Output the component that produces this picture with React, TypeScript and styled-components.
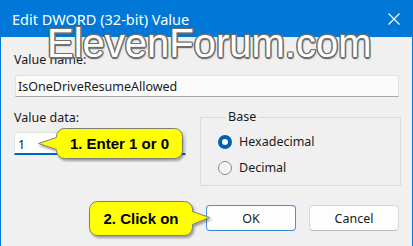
import React from "react";
import styled, { createGlobalStyle } from "styled-components";

const Global = createGlobalStyle`
  html, body { margin: 0; padding: 0; background: #f0f0f0; }
  body { font-family: "Noto Sans", "Liberation Sans", sans-serif; }
`;

const Window = styled.div`
  position: relative;
  width: 413px;
  height: 246px;
  box-sizing: border-box;
  border-left: 1px solid #0078d7;
  border-right: 1px solid #0078d7;
  background: #f0f0f0;
  overflow: hidden;
  display: flex;
  flex-direction: column;
`;

const TitleBar = styled.div`
  height: 37px;
  flex: none;
  background: #0078d7;
  display: flex;
  align-items: center;
  justify-content: space-between;
  padding: 0 12px 0 11px;
`;

const Title = styled.span`
  color: #ffffff;
  font-size: 14.5px;
  line-height: 16px;
  margin-top: 1px;
`;

const CloseBtn = styled.svg`
  width: 12px;
  height: 12px;
  display: block;
  margin-top: 1px;
`;

const Body = styled.div`
  padding: 15px 12px 0 13px;
  display: flex;
  flex-direction: column;
  color: #1a1a1a;
  font-size: 12.5px;
`;

const Label = styled.div`
  line-height: 16px;
  height: 16px;
`;

const Field = styled.div<{ $focused?: boolean }>`
  box-sizing: border-box;
  height: ${(p) => (p.$focused ? 23 : 22)}px;
  padding: ${(p) => (p.$focused ? "4px 3px 0" : "3px 2px 0")};
  line-height: 16px;
  background: ${(p) => (p.$focused ? "#ffffff" : "#fbfbfb")};
  border: 1px solid #e3e3e3;
  border-bottom: ${(p) => (p.$focused ? "2px solid #0067c0" : "1px solid #a8a8a8")};
  border-radius: 3px 3px 0 0;
  color: #1a1a1a;
`;

const NameField = styled(Field)`
  margin: 7px 1px 0 1px;
`;

const DataRow = styled.div`
  display: flex;
  margin-top: 13px;
`;

const DataCol = styled.div`
  width: 172px;
  display: flex;
  flex-direction: column;
`;

const DataField = styled(Field)`
  margin-top: 6px;
`;

const GroupBox = styled.fieldset`
  margin: 0 -1px 0 14px;
  flex: 1;
  border: 1px solid #dadada;
  padding: 8px 0 7px 17px;
  display: flex;
  flex-direction: column;
  gap: 6px;
  min-width: 0;
`;

const Legend = styled.legend`
  margin-left: 8px;
  padding: 0 2px;
  line-height: 14px;
  font-size: 12.5px;
`;

const RadioRow = styled.label`
  display: flex;
  align-items: center;
  height: 20px;
  gap: 7px;
  line-height: 16px;
`;

const RadioDot = styled.span<{ $checked?: boolean }>`
  box-sizing: border-box;
  width: 14px;
  height: 14px;
  border-radius: 50%;
  flex: none;
  background: ${(p) => (p.$checked ? "#ffffff" : "#f6f6f6")};
  border: ${(p) => (p.$checked ? "4px solid #005fb8" : "1px solid #8a8a8a")};
`;

const ButtonRow = styled.div`
  display: flex;
  justify-content: flex-end;
  gap: 13px;
  margin-top: 19px;
  padding-right: 1px;
`;

const Button = styled.button<{ $default?: boolean }>`
  box-sizing: border-box;
  width: 90px;
  height: 26px;
  font-family: inherit;
  font-size: 12.5px;
  color: #1a1a1a;
  background: #fdfdfd;
  border: 1px solid ${(p) => (p.$default ? "#4a8fd8" : "#d6d6d6")};
  border-bottom-color: ${(p) => (p.$default ? "#3c84d4" : "#bcbcbc")};
  border-radius: 4px;
  padding: 0;
`;

const Watermark = styled.div`
  position: absolute;
  left: 46px;
  top: 23px;
  font-family: "Liberation Sans", Arial, sans-serif;
  font-size: 40px;
  line-height: 40px;
  color: #ffffff;
  white-space: nowrap;
  pointer-events: none;
  text-shadow:
    -1px -1px 0 #6f6f6f, 1px -1px 0 #6f6f6f, -1px 1px 0 #6f6f6f, 1px 1px 0 #6f6f6f,
    0 -1.5px 0 #6f6f6f, 0 1.5px 0 #6f6f6f, -1.5px 0 0 #6f6f6f, 1.5px 0 0 #6f6f6f,
    1px 2px 2px rgba(0, 0, 0, 0.35);
`;

const CalloutBox = styled.div`
  position: absolute;
`;

const CalloutShape = styled.svg`
  position: absolute;
  left: 0;
  top: 0;
  overflow: visible;
`;

const CalloutText = styled.span`
  position: absolute;
  display: flex;
  align-items: center;
  justify-content: center;
  font-family: "Liberation Sans", Arial, sans-serif;
  font-weight: 700;
  font-size: 15px;
  color: #000000;
  white-space: nowrap;
`;

type CalloutProps = {
  left: number;
  top: number;
  width: number;
  height: number;
  path: string;
  textBox: { x: number; y: number; w: number; h: number };
  children: React.ReactNode;
};

function Callout({ left, top, width, height, path, textBox, children }: CalloutProps) {
  return (
    <CalloutBox style={{ left, top, width, height }}>
      <CalloutShape width={width} height={height}>
        <defs>
          <filter id={`sh${left}`} x="-20%" y="-30%" width="140%" height="160%">
            <feDropShadow dx="1.5" dy="2" stdDeviation="1.2" floodColor="#000" floodOpacity="0.35" />
          </filter>
        </defs>
        <path d={path} fill="#ffff00" stroke="#7d7d7d" strokeWidth="1" filter={`url(#sh${left})`} />
      </CalloutShape>
      <CalloutText style={{ left: textBox.x, top: textBox.y, width: textBox.w, height: textBox.h }}>
        {children}
      </CalloutText>
    </CalloutBox>
  );
}

export default function App() {
  return (
    <>
      <Global />
      <Window>
        <TitleBar>
          <Title>Edit DWORD (32-bit) Value</Title>
          <CloseBtn viewBox="0 0 12 12">
            <path d="M0.5 0.5 L11.5 11.5 M11.5 0.5 L0.5 11.5" stroke="#ffffff" strokeWidth="1.1" fill="none" />
          </CloseBtn>
        </TitleBar>
        <Body>
          <Label>Value name:</Label>
          <NameField>IsOneDriveResumeAllowed</NameField>
          <DataRow>
            <DataCol>
              <Label>Value data:</Label>
              <DataField $focused>1</DataField>
            </DataCol>
            <GroupBox>
              <Legend>Base</Legend>
              <RadioRow>
                <RadioDot $checked />
                Hexadecimal
              </RadioRow>
              <RadioRow>
                <RadioDot />
                Decimal
              </RadioRow>
            </GroupBox>
          </DataRow>
          <ButtonRow>
            <Button $default>OK</Button>
            <Button>Cancel</Button>
          </ButtonRow>
        </Body>
        <Watermark>ElevenForum.com</Watermark>
        <Callout
          left={29}
          top={122}
          width={160}
          height={42}
          path="M34.5 6.5 H144.5 A8 8 0 0 1 152.5 14.5 V28.5 A8 8 0 0 1 144.5 36.5 H34.5 A8 8 0 0 1 26.5 28.5 V27.5 L8.5 21.5 L26.5 15.5 V14.5 A8 8 0 0 1 34.5 6.5 Z"
          textBox={{ x: 26, y: 6, w: 127, h: 30 }}
        >
          1. Enter 1 or 0
        </Callout>
        <Callout
          left={79}
          top={195}
          width={140}
          height={46}
          path="M17.5 6.5 H104.5 A8 8 0 0 1 112.5 14.5 V16.5 L129.5 22.5 L112.5 29.5 V32.5 A8 8 0 0 1 104.5 40.5 H17.5 A8 8 0 0 1 9.5 32.5 V14.5 A8 8 0 0 1 17.5 6.5 Z"
          textBox={{ x: 9, y: 6, w: 104, h: 34 }}
        >
          2. Click on
        </Callout>
      </Window>
    </>
  );
}
